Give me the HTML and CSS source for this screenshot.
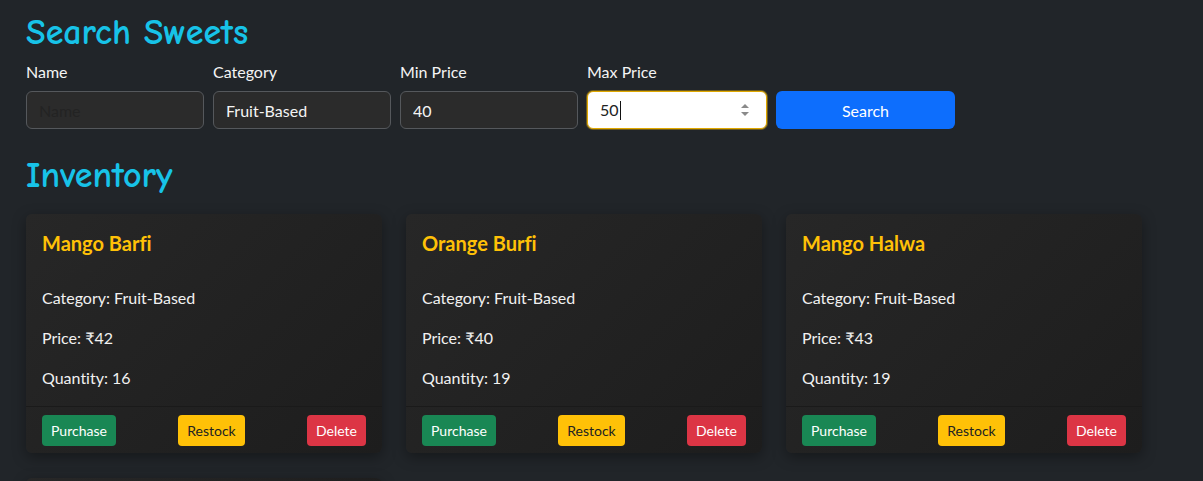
FILE: index.html
```html
<!DOCTYPE html>
<html lang="en">
<head>
<meta charset="utf-8">
<title>Sweets</title>
<link rel="stylesheet" href="styles.css">
</head>
<body>
<main class="page">
  <h2 class="section-title">Search Sweets</h2>
  <form class="search-row">
    <div class="field">
      <label>Name</label>
      <input class="input" type="text" placeholder="Name">
    </div>
    <div class="field">
      <label>Category</label>
      <input class="input" type="text" value="Fruit-Based">
    </div>
    <div class="field">
      <label>Min Price</label>
      <input class="input" type="text" value="40">
    </div>
    <div class="field">
      <label>Max Price</label>
      <div class="input input-focus"><span>50</span><span class="caret"></span>
        <svg class="spin" width="10" height="20" viewBox="0 0 10 20"><path d="M1 8 L5 4 L9 8 Z M1 12 L5 16 L9 12 Z" fill="#8a8a8a"/></svg>
      </div>
    </div>
    <div class="field">
      <label>&nbsp;</label>
      <button type="button" class="btn-search">Search</button>
    </div>
  </form>

  <h2 class="section-title inv">Inventory</h2>
  <div class="grid">
    <div class="card">
      <div class="card-body">
        <h5 class="card-title">Mango Barfi</h5>
        <div class="card-id">ID: 101</div>
        <p>Category: Fruit-Based</p>
        <p>Price: ₹42</p>
        <p>Quantity: 16</p>
      </div>
      <div class="card-footer">
        <button class="btn btn-green">Purchase</button>
        <button class="btn btn-yellow">Restock</button>
        <button class="btn btn-red">Delete</button>
      </div>
    </div>
    <div class="card">
      <div class="card-body">
        <h5 class="card-title">Orange Burfi</h5>
        <div class="card-id">ID: 102</div>
        <p>Category: Fruit-Based</p>
        <p>Price: ₹40</p>
        <p>Quantity: 19</p>
      </div>
      <div class="card-footer">
        <button class="btn btn-green">Purchase</button>
        <button class="btn btn-yellow">Restock</button>
        <button class="btn btn-red">Delete</button>
      </div>
    </div>
    <div class="card">
      <div class="card-body">
        <h5 class="card-title">Mango Halwa</h5>
        <div class="card-id">ID: 103</div>
        <p>Category: Fruit-Based</p>
        <p>Price: ₹43</p>
        <p>Quantity: 19</p>
      </div>
      <div class="card-footer">
        <button class="btn btn-green">Purchase</button>
        <button class="btn btn-yellow">Restock</button>
        <button class="btn btn-red">Delete</button>
      </div>
    </div>
    <div class="card card-next"></div>
  </div>
</main>
</body>
</html>
```

FILE: styles.css
```css
* { box-sizing: border-box; }
html, body { margin: 0; }
body {
  background: #212529;
  color: #f1f1f1;
  font-family: Lato, "Noto Sans", sans-serif;
  font-size: 16px;
  line-height: 1.5;
  overflow: hidden;
  font-variant-ligatures: none;
}
.page {
  padding: 12px 26px 0 26px;
}
.section-title {
  margin: 0 0 8px 0;
  font-family: "Comic Sans MS", "Comic Neue", "DejaVu Sans", sans-serif;
  font-weight: 700;
  font-size: 36px;
  line-height: 42px;
  color: #17c3e8;
}
.section-title.inv { margin-top: 26px; margin-bottom: 17px; }
.search-row {
  display: flex;
  gap: 9px;
  margin: 0;
}
.field {
  display: flex;
  flex-direction: column;
  width: 178px;
}
.field:nth-child(4) { width: 180px; }
.field label {
  font-size: 16px;
  line-height: 20px;
  margin-bottom: 9px;
  color: #f4f4f4;
}
.input {
  height: 38px;
  width: 100%;
  background: #2b2b2b;
  border: 1px solid #55585c;
  border-radius: 6px;
  padding: 0 12px;
  color: #f4f4f4;
  font-family: inherit;
  font-size: 16px;
  outline: none;
}
.input::placeholder { color: #232323; }
.input-focus {
  background: #fff;
  border-color: #e0a800;
  box-shadow: 0 0 0 1px rgba(255, 193, 7, 0.35);
  color: #222;
  display: flex;
  align-items: center;
}
.caret {
  display: inline-block;
  width: 1px;
  height: 19px;
  background: #111;
  margin-left: 1px;
}
.spin { margin-left: auto; margin-right: 4px; }
.btn-search {
  height: 38px;
  width: 179px;
  background: #0d6efd;
  color: #fff;
  border: none;
  border-radius: 6px;
  font-family: inherit;
  font-size: 16px;
}
.grid {
  display: grid;
  grid-template-columns: repeat(3, 356px);
  column-gap: 24px;
  row-gap: 25px;
}
.card {
  background: linear-gradient(135deg, #272727 0%, #1d1d1d 100%);
  border-radius: 6px;
  box-shadow: 0 4px 14px rgba(0, 0, 0, 0.35);
  display: flex;
  flex-direction: column;
}
.card-next { height: 60px; }
.card-body {
  padding: 16px 16px 0 16px;
}
.card-title {
  margin: 0;
  color: #ffc107;
  font-size: 20px;
  font-weight: 700;
  line-height: 26px;
}
.card-id {
  color: #262626;
  font-size: 16px;
  line-height: 20px;
  margin-bottom: 10px;
}
.card p {
  margin: 0 0 16px 0;
  font-size: 16px;
  line-height: 24px;
}
.card-footer {
  border-top: 1px solid #1a1a1a;
  padding: 8px 16px 7px 16px;
  display: flex;
  justify-content: space-between;
}
.btn {
  height: 31px;
  padding: 0 9px;
  border: none;
  border-radius: 4px;
  font-family: inherit;
  font-size: 14px;
}
.btn-green { background: #198754; color: #fff; }
.btn-yellow { background: #ffc107; color: #222; }
.btn-red { background: #dc3545; color: #fff; }
```
